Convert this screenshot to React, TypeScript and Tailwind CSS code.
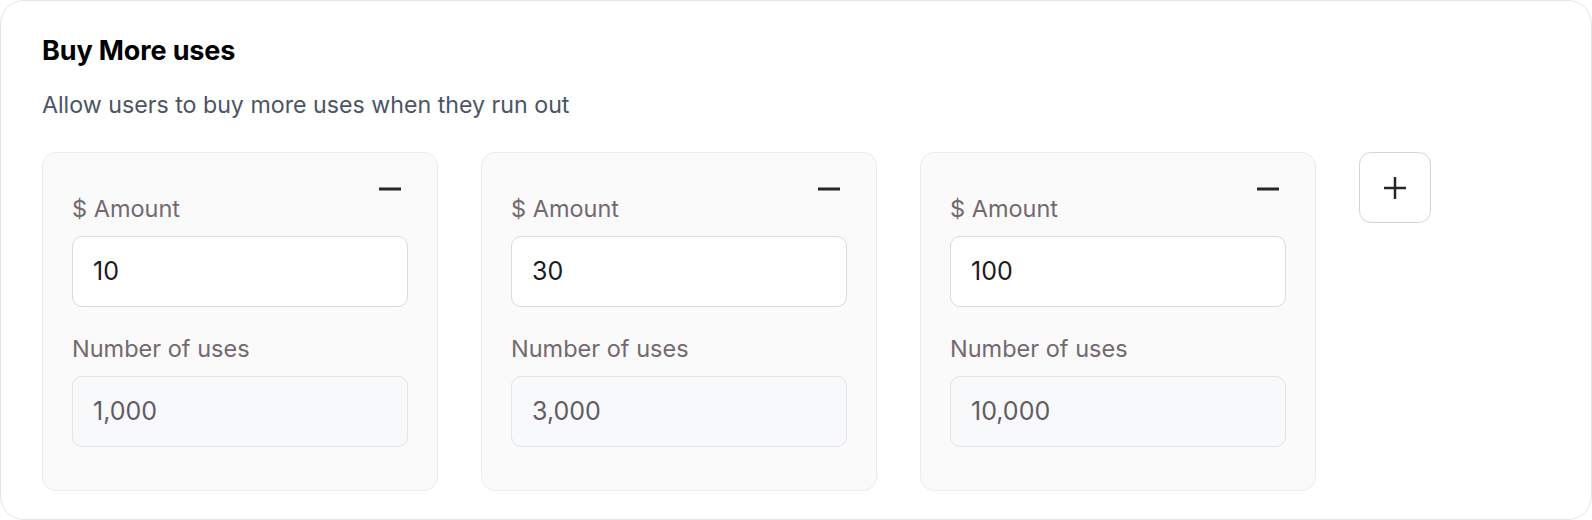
import React from 'react';

type Tier = { amount: string; uses: string };

const tiers: Tier[] = [
  { amount: '10', uses: '1,000' },
  { amount: '30', uses: '3,000' },
  { amount: '100', uses: '10,000' },
];

const MinusIcon = () => (
  <svg width="22" height="22" viewBox="0 0 22 22" fill="none">
    <line x1="0" y1="11" x2="22" y2="11" stroke="#2a2329" strokeWidth="3" />
  </svg>
);

const PlusIcon = () => (
  <svg width="22" height="22" viewBox="0 0 22 22" fill="none">
    <line x1="0" y1="11" x2="22" y2="11" stroke="#2a2329" strokeWidth="2.5" />
    <line x1="11" y1="0" x2="11" y2="22" stroke="#2a2329" strokeWidth="2.5" />
  </svg>
);

const TierCard: React.FC<{ tier: Tier }> = ({ tier }) => (
  <div className="relative w-[396px] shrink-0 rounded-[14px] border border-[#ececec] bg-[#fafafa] px-[29px] pt-[40px] pb-[43px]">
    <button className="absolute top-[25px] right-[36px] flex h-[22px] w-[22px] items-center justify-center">
      <MinusIcon />
    </button>
    <label className="block text-[23.5px] leading-[32px] text-[#73696f]">$ Amount</label>
    <div className="mt-[11px] flex h-[71px] items-center rounded-[10px] border border-[#dcd9dc] bg-white px-[20px] text-[25px] text-[#1f1a1e]">
      {tier.amount}
    </div>
    <label className="mt-[26px] block text-[23.5px] leading-[32px] text-[#73696f]">Number of uses</label>
    <div className="mt-[11px] flex h-[71px] items-center rounded-[10px] border border-[#e4e3e6] bg-[#f8f9fb] px-[20px] text-[25px] text-[#625c62]">
      {tier.uses}
    </div>
  </div>
);

export default function App() {
  return (
    <div
      className="h-[520px] w-full rounded-[24px] border border-[#e5e5e5] bg-white pl-[41px] pt-[34px]"
      style={{ fontFamily: 'Inter, "Noto Sans", sans-serif' }}
    >
      <h2 className="text-[27px] leading-[32px] font-bold tracking-[-0.005em] text-black">Buy More uses</h2>
      <p className="mt-[22px] text-[23.2px] leading-[32px] text-[#4b5563]">
        Allow users to buy more uses when they run out
      </p>
      <div className="mt-[31px] flex items-start gap-[43px]">
        {tiers.map((t) => (
          <TierCard key={t.amount} tier={t} />
        ))}
        <button className="flex h-[71px] w-[72px] items-center justify-center rounded-[12px] border border-[#d6d4d9] bg-white">
          <PlusIcon />
        </button>
      </div>
    </div>
  );
}
